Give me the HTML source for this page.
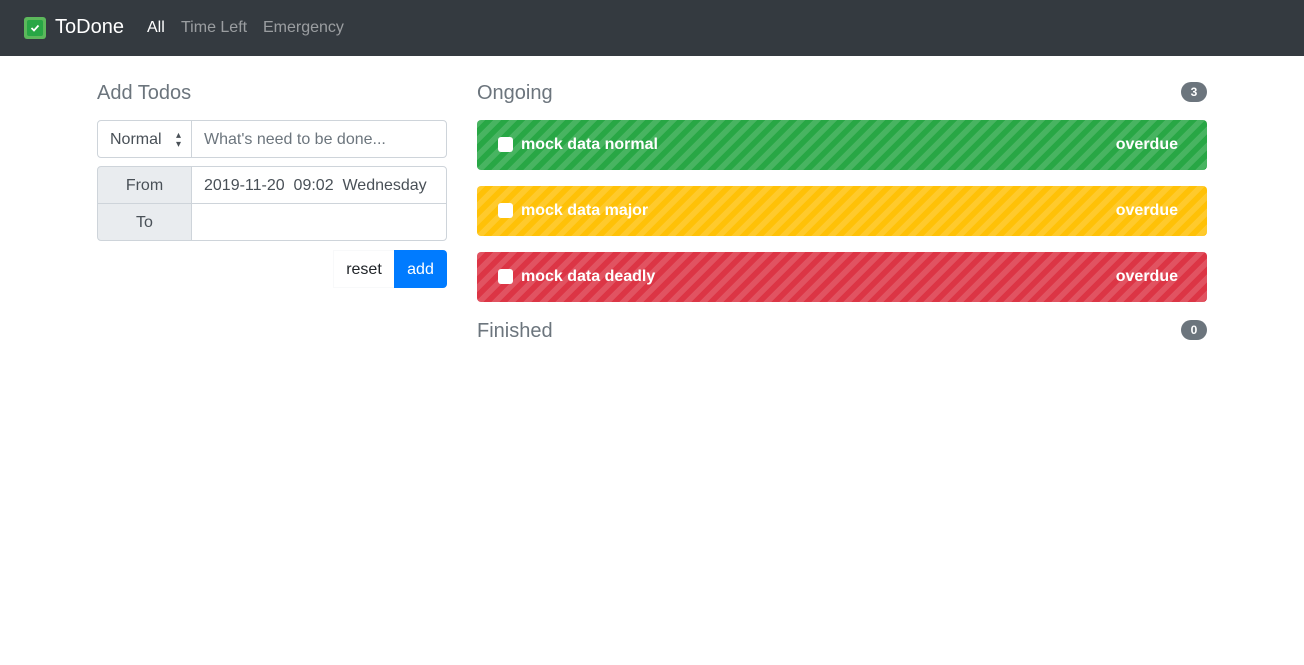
<!DOCTYPE html>
<html><head><meta charset="utf-8"><style>
*{box-sizing:border-box;margin:0;padding:0}
body{width:1304px;height:665px;background:#fff;font-family:"Liberation Sans",sans-serif;color:#212529;position:relative;overflow:hidden}
nav{height:56px;background:#343a40;position:relative}
.logo{position:absolute;left:24px;top:17px;width:22px;height:22px;background:#5cb85c;border-radius:3px}
.logo div{position:absolute;left:3px;top:3px;width:16px;height:16px;background:#28a745;border-radius:2px}
.brand{position:absolute;left:55px;top:16px;font-size:20px;color:#fff}
.nl{position:absolute;top:19px;font-size:16px;color:rgba(255,255,255,.5)}
h5{position:absolute;font-size:20px;font-weight:400;color:#6c757d}
.box{position:absolute;border:1px solid #ced4da;font-size:16px}
.bar{position:absolute;left:477px;width:730px;height:50px;border-radius:4px;color:#fff;font-weight:700;font-size:16px;
background-image:linear-gradient(135deg,rgba(255,255,255,.15) 25%,transparent 25%,transparent 50%,rgba(255,255,255,.15) 50%,rgba(255,255,255,.15) 75%,transparent 75%,transparent);background-size:16px 16px}
.bar .cb{position:absolute;left:21px;top:17px;width:15px;height:15px;background:#fff;border-radius:3px}
.bar .t{position:absolute;left:44px;top:16px}
.bar .o{position:absolute;right:29px;top:16px}
.badge{position:absolute;left:1181px;width:26px;height:20px;border-radius:10px;background:#6c757d;color:#fff;font-size:12px;font-weight:700;text-align:center;line-height:20px}
</style></head><body>
<nav><div class="logo"><div></div><svg style="position:absolute;left:6px;top:7px" width="10" height="8" viewBox="0 0 10 8"><path d="M1.5 4l2.5 2.5 4.5-5" stroke="#fff" stroke-width="1.8" fill="none"/></svg></div>
<div class="brand">ToDone</div>
<div class="nl" style="left:147px;color:#fff">All</div>
<div class="nl" style="left:181px">Time Left</div>
<div class="nl" style="left:263px">Emergency</div></nav>
<h5 style="left:97px;top:82px">Add Todos</h5>
<div class="box" style="left:97px;top:120px;width:95px;height:38px;border-radius:4px 0 0 4px;padding:10px 12px;color:#495057">Normal <span style="position:absolute;right:10px;top:10px;font-size:10px;line-height:9px">▴<br>▾</span></div>
<div class="box" style="left:191px;top:120px;width:256px;height:38px;border-radius:0 4px 4px 0;padding:10px 12px;color:#6c757d">What's need to be done...</div>
<div class="box" style="left:97px;top:166px;width:95px;height:38px;background:#e9ecef;border-radius:4px 0 0 0;text-align:center;padding-top:10px;color:#495057">From</div>
<div class="box" style="left:191px;top:166px;width:256px;height:38px;border-radius:0 4px 0 0;padding:10px 12px;color:#495057">2019-11-20&nbsp; 09:02&nbsp; Wednesday</div>
<div class="box" style="left:97px;top:203px;width:95px;height:38px;background:#e9ecef;border-radius:0 0 0 4px;text-align:center;padding-top:10px;color:#495057">To</div>
<div class="box" style="left:191px;top:203px;width:256px;height:38px;border-radius:0 0 4px 0"></div>
<div style="position:absolute;left:333px;top:250px;width:62px;height:38px;border:1px solid #f8f9fa;font-size:16px;text-align:center;line-height:37px">reset</div>
<div style="position:absolute;left:394px;top:250px;width:53px;height:38px;background:#007bff;border-radius:0 4px 4px 0;color:#fff;font-size:16px;text-align:center;line-height:39px">add</div>
<h5 style="left:477px;top:82px">Ongoing</h5><div class="badge" style="top:82px">3</div>
<div class="bar" style="top:120px;background-color:#28a745"><div class="cb"></div><span class="t">mock data normal</span><span class="o">overdue</span></div>
<div class="bar" style="top:186px;background-color:#ffc107"><div class="cb"></div><span class="t">mock data major</span><span class="o">overdue</span></div>
<div class="bar" style="top:252px;background-color:#dc3545"><div class="cb"></div><span class="t">mock data deadly</span><span class="o">overdue</span></div>
<h5 style="left:477px;top:320px">Finished</h5><div class="badge" style="top:320px">0</div>
</body></html>
